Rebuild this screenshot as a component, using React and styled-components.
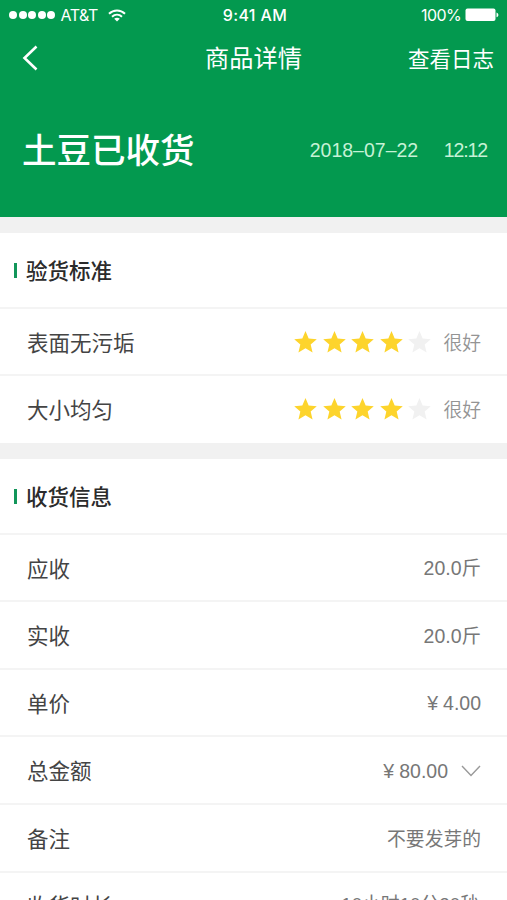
import React from 'react';
import styled, { createGlobalStyle } from 'styled-components';

const standards = [
  { name: '表面无污垢', score: 4, label: '很好' },
  { name: '大小均匀', score: 4, label: '很好' },
];

const receipt = [
  { name: '应收', value: '20.0', unit: '斤' },
  { name: '实收', value: '20.0', unit: '斤' },
  { name: '单价', value: '4.00', price: true },
  { name: '总金额', value: '80.00', price: true, expandable: true },
  { name: '备注', value: '不要发芽的', remark: true },
  { name: '收货时长', value: '10小时10分20秒', duration: true },
];

function StatusBar(){
  return(
    <Status>
      <Carrier>
        <Signal>
          {[1, 2, 3, 4, 5].map(dot => <Dot key={dot} />)}
        </Signal>
        <CarrierName>AT&amp;T</CarrierName>
        <svg width="18" height="13" viewBox="0 0 18 13" fill="none" stroke="#fff" strokeWidth="2">
          <path d="M1 4.8 C5.5 0.3 12.5 0.3 17 4.8" />
          <path d="M4 7.8 C7 5 11 5 14 7.8" />
          <path d="M9 12.6 L6.2 9.8 C7.8 8.4 10.2 8.4 11.8 9.8 Z" fill="#fff" stroke="none" />
        </svg>
      </Carrier>
      <Clock>9:41 AM</Clock>
      <Battery>
        100%
        <svg width="34" height="14" viewBox="0 0 34 14">
          <rect x="0.5" y="0.5" width="30" height="12.5" rx="2" fill="#fff" />
          <path d="M31.5 4.5 C34 5.2 34 8.6 31.5 9.3 Z" fill="#fff" />
        </svg>
      </Battery>
    </Status>
  );
}

function Stars({ score }){
  return(
    <StarList>
      {[1, 2, 3, 4, 5].map(n => (
        <Star key={n} viewBox="0 0 24 23" $on={n <= score}>
          <path d="M12 0 L15.3 7.8 L23.8 8.6 L17.4 14.1 L19.4 22.5 L12 18 L4.6 22.5 L6.6 14.1 L0.2 8.6 L8.7 7.8 Z" />
        </Star>
      ))}
    </StarList>
  );
}

function InfoRow({ item }){
  const { name, value, unit, price, expandable, remark, duration } = item;

  return(
    <Row>
      <Name>{name}</Name>
      <Value $remark={remark} $duration={duration}>
        {price && <Currency>¥</Currency>}
        {value}{unit}
        {expandable && (
          <Chevron width="20" height="12" viewBox="0 0 20 12">
            <path d="M1 1 L10 10.5 L19 1" />
          </Chevron>
        )}
      </Value>
    </Row>
  );
}

function App(){
  return(
    <>
      <GlobalStyle />
      <Page>
        <Header>
          <StatusBar />
          <NavBar>
            <Back>
              <svg width="16" height="26" viewBox="0 0 16 26" fill="none" stroke="#fff" strokeWidth="2.6">
                <path d="M14.5 1.5 L2.5 13 L14.5 24.5" />
              </svg>
            </Back>
            <Title>商品详情</Title>
            <LogLink>查看日志</LogLink>
          </NavBar>
          <Summary>
            <State>土豆已收货</State>
            <Moment>
              <span>2018–07–22</span>
              <Time>12:12</Time>
            </Moment>
          </Summary>
        </Header>

        <Section>
          <SectionTitle><span>验货标准</span></SectionTitle>
          {standards.map(item => (
            <Row key={item.name}>
              <Name>{item.name}</Name>
              <Rating>
                <Stars score={item.score} />
                <RatingLabel>{item.label}</RatingLabel>
              </Rating>
            </Row>
          ))}
        </Section>

        <Section>
          <SectionTitle><span>收货信息</span></SectionTitle>
          {receipt.map(item => <InfoRow key={item.name} item={item} />)}
        </Section>
      </Page>
    </>
  );
}

const GlobalStyle = createGlobalStyle`
  * {
    box-sizing: border-box;
  }

  body {
    margin: 0;
    overflow: hidden;
    font-family: "Liberation Sans", "Noto Sans CJK SC", sans-serif;
    background-color: #f1f1f1;
  }
`;

const Page = styled.main`
  width: 507px;
  height: 900px;
  overflow: hidden;
  background-color: #f1f1f1;
`;

const Header = styled.header`
  height: 217.4px;
  background-color: #03994f;
  color: #fff;
`;

const Status = styled.div`
  height: 30px;
  padding: 0 8px 0 9px;
  display: grid;
  grid-template-columns: 1fr auto 1fr;
  align-items: center;
  font-family: Inter, sans-serif;
  font-size: 16px;
`;

const Carrier = styled.div`
  display: flex;
  align-items: center;
`;

const Signal = styled.div`
  display: flex;
  gap: 1.6px;
  margin-right: 5px;
`;

const Dot = styled.i`
  width: 8px;
  height: 8px;
  border-radius: 50%;
  background-color: #fff;
`;

const CarrierName = styled.span`
  width: 48px;
  letter-spacing: -0.4px;
`;

const Clock = styled.div`
  padding-left: 2px;
  font-weight: 500;
  letter-spacing: 0.4px;
`;

const Battery = styled.div`
  display: flex;
  justify-content: flex-end;
  align-items: center;
  gap: 4px;
  letter-spacing: -0.6px;
`;

const NavBar = styled.nav`
  height: 56px;
  padding: 0 13px 0 22px;
  display: grid;
  grid-template-columns: 1fr auto 1fr;
  align-items: center;
  line-height: 34px;
`;

const Back = styled.div`
  display: flex;
`;

const Title = styled.h1`
  margin: 0 9px 0 0;
  padding-top: 2px;
  font-size: 24.2px;
  font-weight: 400;
`;

const LogLink = styled.div`
  padding-top: 3px;
  font-size: 21.5px;
  text-align: right;
`;

const Summary = styled.div`
  height: 128px;
  padding: 0 20px 0 22px;
  display: flex;
  align-items: center;
  justify-content: space-between;
  line-height: 40px;
`;

const State = styled.h2`
  margin: 0;
  padding-top: 2px;
  font-size: 34.5px;
  font-weight: 500;
`;

const Moment = styled.div`
  display: flex;
  gap: 25.5px;
  font-size: 19.5px;
  color: #c6f2d6;
`;

const Time = styled.span`
  letter-spacing: -1.1px;
`;

const Section = styled.section`
  margin-top: 16px;
  background-color: #fff;
`;

const SectionTitle = styled.h3`
  height: 75.4px;
  margin: 0;
  padding: 1px 0 0 14px;
  display: flex;
  align-items: center;
  border-bottom: 2px solid #f4f4f4;
  font-size: 21.5px;
  font-weight: 500;
  line-height: 26px;
  color: #2b2b2b;

  &::before {
    content: '';
    width: 3px;
    height: 15px;
    margin-right: 9px;
    background-color: #12965a;
  }

  span {
    padding-top: 3px;
  }
`;

const Row = styled.div`
  height: 67.6px;
  padding: 1.4px 26px 0 27px;
  display: flex;
  align-items: center;
  justify-content: space-between;
  border-bottom: 2px solid #f4f4f4;
  line-height: 26px;

  &:last-child {
    height: 66.8px;
    border-bottom-color: #fff;
  }
`;

const Name = styled.span`
  padding-top: 3px;
  font-size: 21.5px;
  color: #444;
`;

const Rating = styled.div`
  display: flex;
  align-items: center;
`;

const StarList = styled.div`
  display: flex;
  gap: 5.4px;
  margin-right: 12.5px;
`;

const Star = styled.svg`
  width: 23px;
  height: 22px;
  fill: ${props => props.$on ? '#fdd42c' : '#f1f1f1'};
`;

const RatingLabel = styled.span`
  padding-top: 3px;
  font-size: 18.8px;
  font-weight: 350;
  color: #949494;
`;

const Value = styled.div`
  padding-top: ${props => props.$remark ? '3px' : '0'};
  padding-right: ${props => props.$duration ? '2px' : '0'};
  padding-bottom: ${props => props.$duration ? '2px' : '0'};
  display: flex;
  align-items: center;
  font-size: ${props => props.$remark || props.$duration ? '18.8px' : '19.5px'};
  color: #777;
`;

const Currency = styled.span`
  margin-right: 5px;
`;

const Chevron = styled.svg`
  margin-left: 13px;
  fill: none;
  stroke: #999;
  stroke-width: 1.4;
`;

export default App;
